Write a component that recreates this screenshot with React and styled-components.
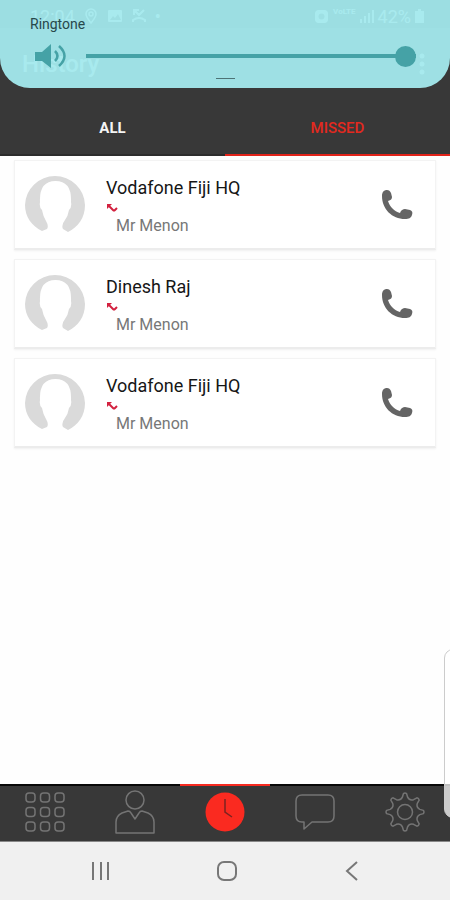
import React, { useState } from "react";
import styled, { createGlobalStyle } from "styled-components";

const GlobalStyle = createGlobalStyle`
  *, *::before, *::after { box-sizing: border-box; }
  body {
    margin: 0;
    background: #fefefe;
    font-family: Roboto, "Liberation Sans", sans-serif;
  }
  button { font: inherit; border: 0; padding: 0; background: none; cursor: pointer; }
  svg { display: block; flex: none; }
`;

const Screen = styled.div`
  position: relative;
  display: flex;
  flex-direction: column;
  min-height: 100vh;
  overflow: hidden;
`;

const Header = styled.header`
  position: relative;
  background: #383838;
`;

const StatusBar = styled.div`
  display: flex;
  align-items: center;
  justify-content: space-between;
  height: 28px;
  padding: 4px 26px 0 30px;
  background: #1c1c1c;
  color: #fff;
  font-size: 18px;
`;

const StatusGroup = styled.div`
  display: flex;
  align-items: center;
  gap: ${(p) => p.$gap}px;
`;

const NetworkLabel = styled.span`
  align-self: flex-start;
  font-size: 8px;
  font-weight: 700;
  line-height: 12px;
`;

const TitleBar = styled.div`
  display: flex;
  align-items: center;
  justify-content: space-between;
  height: 72px;
  padding: 0 18px 0 22px;
  color: #fff;
`;

const Title = styled.h1`
  margin: 0;
  font-size: 24px;
  font-weight: 500;
`;

const Tabs = styled.div`
  display: grid;
  grid-template-columns: 1fr 1fr;
  height: 56px;
`;

const Tab = styled.button.attrs({ type: "button", role: "tab" })`
  && {
    padding-top: 2px;
    border-bottom: 2px solid ${(p) => (p.$active ? "#e2231a" : "#2c2c2c")};
    color: ${(p) => (p.$active ? "#e2291f" : "#f4f4f4")};
    font-size: 15px;
    font-weight: ${(p) => (p.$active ? 500 : 700)};
  }
`;

const VolumePanel = styled.section`
  position: absolute;
  inset: 0 0 auto 0;
  height: 88px;
  padding: 16px 30px 0;
  background: rgba(163, 233, 237, 0.95);
  border-radius: 0 0 30px 30px;
`;

const VolumeLabel = styled.label`
  display: block;
  color: #27484b;
  font-size: 14px;
  line-height: 16px;
`;

const VolumeRow = styled.div`
  display: flex;
  align-items: center;
  gap: 20px;
  height: 28px;
  margin-top: 10px;
  padding: 0 4px;
`;

const Slider = styled.input`
  flex: 1;
  min-width: 0;
  height: 22px;
  margin: 0;
  appearance: none;
  background: linear-gradient(#45a2a6, #45a2a6) center / 100% 4px no-repeat;
  &::-webkit-slider-thumb {
    appearance: none;
    width: 21px;
    height: 21px;
    border-radius: 50%;
    background: #45a2a6;
  }
`;

const Handle = styled.div`
  width: 19px;
  height: 1px;
  margin: 8px auto 0;
  background: #4d7375;
`;

const CallList = styled.ul`
  flex: 1;
  display: flex;
  flex-direction: column;
  gap: 9px;
  margin: 0;
  padding: 4px 14px;
  list-style: none;
`;

const CallCard = styled.li`
  display: flex;
  align-items: flex-start;
  min-height: 90px;
  padding: 15px 22px 0 10px;
  background: #fff;
  border: 1px solid #f3f3f3;
  border-bottom: 2px solid #ececec;
  box-shadow: 0 1px 2px rgba(0, 0, 0, 0.06);
`;

const CallText = styled.div`
  flex: 1;
  min-width: 0;
  margin-left: 20px;
`;

const CallName = styled.div`
  color: #161616;
  font-size: 18px;
  line-height: 24px;
`;

const CallOwner = styled.div`
  padding-left: 10px;
  color: #777;
  font-size: 16px;
  line-height: 20px;
`;

const MissedMark = styled.div`
  padding: 4px 0 4px 1px;
`;

const CallButton = styled.button.attrs({ type: "button" })`
  margin-top: 13px;
`;

const BottomNav = styled.nav`
  display: grid;
  grid-template-columns: repeat(5, 1fr);
  height: 58px;
  background: #383838;
  border-bottom: 1px solid #888;
`;

const NavItem = styled.button.attrs({ type: "button" })`
  && {
    display: flex;
    align-items: center;
    justify-content: center;
    padding-bottom: 3px;
    border-top: 2px solid ${(p) => (p.$active ? "#f62a20" : "#080808")};
    color: #747474;
  }
`;

const SystemNav = styled.nav`
  display: flex;
  align-items: center;
  justify-content: space-between;
  height: 58px;
  padding: 0 84px 0 87px;
  background: #f0f0f0;
  color: #777;
`;

const SystemButton = styled.button.attrs({ type: "button" })`
  display: flex;
  && { color: inherit; }
`;

const EdgeHandle = styled.div`
  position: absolute;
  right: -12px;
  bottom: 82px;
  width: 18px;
  height: 169px;
  border: 1px solid #ccc;
  border-radius: 9px;
  background: rgba(255, 255, 255, 0.74);
`;

const PinIcon = () => (
  <svg width="16" height="16" viewBox="0 0 16 16" fill="none" stroke="#fff" strokeWidth="1.5">
    <path d="M8 15C4 10 3 8.500 3 6a5 5 0 0 1 10 0c0 2.500-1 4-5 9Z" />
    <circle cx="8" cy="6" r="2" />
  </svg>
);

const PhotoIcon = () => (
  <svg width="16" height="16" viewBox="0 0 16 16">
    <rect x="1" y="2" width="14" height="12" rx="1" fill="#fff" />
    <path d="m3 12 3-4 2 2 3-4 3 6Z" fill="#333" />
  </svg>
);

const MissedStatusIcon = () => (
  <svg width="16" height="16" viewBox="0 0 16 16" fill="none" stroke="#fff" strokeWidth="2">
    <path d="m3 2 5 5 5-5M3 7V2h5" />
    <path d="M2 14v-2q6-4 12 0v2" />
  </svg>
);

const AlarmIcon = () => (
  <svg width="15" height="15" viewBox="0 0 15 15">
    <rect x="1" y="1" width="13" height="13" rx="4" fill="#fff" />
    <circle cx="7.500" cy="7.500" r="3" fill="#444" />
  </svg>
);

const SignalIcon = () => (
  <svg width="14" height="14" viewBox="0 0 14 14" fill="#fff">
    <path d="M0 10h2v4H0zM4 7h2v7H4zM8 4h2v10H8zM12 1h2v13h-2z" />
  </svg>
);

const BatteryIcon = () => (
  <svg width="9" height="14" viewBox="0 0 9 14" fill="#fff">
    <path d="M3 0h3v2h3v12H0V2h3Z" />
  </svg>
);

const MoreIcon = () => (
  <svg width="20" height="24" viewBox="0 0 20 24" fill="#fff">
    <circle cx="10" cy="4" r="2.500" />
    <circle cx="10" cy="12" r="2.500" />
    <circle cx="10" cy="20" r="2.500" />
  </svg>
);

const SpeakerIcon = () => (
  <svg width="32" height="26" viewBox="0 0 32 26" fill="#45a2a6">
    <path d="M1 9h7l9-8v24l-9-7H1Z" />
    <g fill="none" stroke="#45a2a6" strokeWidth="2.500">
      <path d="M21 8q5 5 0 10" />
      <path d="M25 3q11 10 0 20" />
    </g>
  </svg>
);

const Avatar = () => (
  <svg width="61" height="58" viewBox="0 0 61 58">
    <path
      fill="#dadada"
      d="M30 0A30 30 0 0 0 0 29C0 41 7 50 17 55L22 53Q24 50 21 45Q18 40 17 34Q14 31 15 26Q14 5 30.500 5Q47 5 46 26Q47 31 44 34Q43 40 40 44Q36 49 38 53L43 56C53 51 60 42 60 29A30 30 0 0 0 30 0Z"
    />
  </svg>
);

const MissedArrow = () => (
  <svg width="11" height="8" viewBox="0 0 11 8" fill="none" stroke="#d3213f">
    <path d="M2 2 6 6Q7 7 8 6L10 4" strokeWidth="2" />
    <path d="M0 0h5L0 5Z" fill="#d3213f" stroke="none" />
  </svg>
);

const PhoneIcon = () => (
  <svg width="32" height="32" viewBox="0 0 32 32">
    <path
      fill="#646464"
      d="M1 7C1 3 3 1 6 1C8 1 9 2 10 4L11 8C11 10 10 11 7 12C9 18 13 22 19 24C20 21 22 20 24 20L29 21C31 22 32 23 31 26C30 29 28 30 24 30C11 30 1 20 1 7Z"
    />
  </svg>
);

const DialpadIcon = () => (
  <svg width="40" height="40" viewBox="0 0 40 40" fill="none" stroke="currentColor" strokeWidth="1.500">
    {[1, 15.5, 30].map((y) =>
      [1, 15.5, 30].map((x) => <rect key={`${x}-${y}`} x={x} y={y} width="9" height="9" rx="3" />)
    )}
  </svg>
);

const PersonIcon = () => (
  <svg width="40" height="44" viewBox="0 0 40 44" fill="none" stroke="currentColor" strokeWidth="1.500">
    <circle cx="20" cy="10" r="9" />
    <path d="M1 43V32Q1 26 7 23L13 21Q15 21 16 23L20 29L24 23Q25 21 27 21L33 23Q39 26 39 32V43Z" strokeLinejoin="round" />
  </svg>
);

const ClockIcon = () => (
  <svg width="40" height="40" viewBox="0 0 40 40">
    <circle cx="20" cy="20" r="19.500" fill="#fa2a20" />
    <path d="M20 7V20L27 25" fill="none" stroke="#7c2320" strokeWidth="1.500" />
  </svg>
);

const ChatIcon = () => (
  <svg width="40" height="38" viewBox="0 0 40 38" fill="none" stroke="currentColor" strokeWidth="1.500">
    <path
      d="M7 2H33Q39 2 39 8V23Q39 29 33 29H17L9 36V29H7Q1 29 1 23V8Q1 2 7 2Z"
      strokeLinejoin="round"
    />
  </svg>
);

const gearPath = (() => {
  const parts = [];
  for (let i = 0; i < 8; i += 1) {
    const at = (r, deg) => {
      const a = ((i * 45 + deg - 90) * Math.PI) / 180;
      return `${(20 + r * Math.cos(a)).toFixed(1)} ${(20 + r * Math.sin(a)).toFixed(1)}`;
    };
    parts.push(
      `${i ? "L" : "M"}${at(18.5, -5)}Q${at(19.5, 0)} ${at(18.5, 5)}L${at(15, 10)}Q${at(12, 22.5)} ${at(15, 35)}`
    );
  }
  return `${parts.join("")}Z`;
})();

const GearIcon = () => (
  <svg width="40" height="40" viewBox="0 0 40 40" fill="none" stroke="currentColor" strokeWidth="1.500">
    <path d={gearPath} strokeLinejoin="round" />
    <circle cx="20" cy="20" r="7.500" />
  </svg>
);

const RecentsIcon = () => (
  <svg width="28" height="20" viewBox="0 0 28 20" stroke="currentColor" strokeWidth="2">
    <path d="M6 1v18M14 1v18M21 1v18" />
  </svg>
);

const HomeIcon = () => (
  <svg width="22" height="22" viewBox="0 0 22 22" fill="none" stroke="currentColor" strokeWidth="2">
    <rect x="2" y="2" width="18" height="18" rx="6" />
  </svg>
);

const BackIcon = () => (
  <svg width="28" height="20" viewBox="0 0 28 20" fill="none" stroke="currentColor" strokeWidth="2">
    <path d="M19 1 9 10l10 9" />
  </svg>
);

const calls = [
  { id: 1, name: "Vodafone Fiji HQ", owner: "Mr Menon" },
  { id: 2, name: "Dinesh Raj", owner: "Mr Menon" },
  { id: 3, name: "Vodafone Fiji HQ", owner: "Mr Menon" },
];

const navItems = [
  { id: "dialpad", label: "Dialpad", Icon: DialpadIcon },
  { id: "contacts", label: "Contacts", Icon: PersonIcon },
  { id: "history", label: "History", Icon: ClockIcon },
  { id: "messages", label: "Messages", Icon: ChatIcon },
  { id: "settings", label: "Settings", Icon: GearIcon },
];

export default function App() {
  const [tab, setTab] = useState("MISSED");
  const [page, setPage] = useState("history");
  const [volume, setVolume] = useState(100);

  return (
    <Screen>
      <GlobalStyle />
      <Header>
        <StatusBar>
          <StatusGroup $gap={8}>
            <span>12:04</span>
            <PinIcon />
            <PhotoIcon />
            <MissedStatusIcon />
            <span>•</span>
          </StatusGroup>
          <StatusGroup $gap={4}>
            <AlarmIcon />
            <NetworkLabel>VoLTE</NetworkLabel>
            <SignalIcon />
            <span>42%</span>
            <BatteryIcon />
          </StatusGroup>
        </StatusBar>
        <TitleBar>
          <Title>History</Title>
          <button type="button" aria-label="More options">
            <MoreIcon />
          </button>
        </TitleBar>
        <Tabs role="tablist">
          {["ALL", "MISSED"].map((name) => (
            <Tab key={name} $active={tab === name} aria-selected={tab === name} onClick={() => setTab(name)}>
              {name}
            </Tab>
          ))}
        </Tabs>
        <VolumePanel>
          <VolumeLabel htmlFor="ringtone">Ringtone</VolumeLabel>
          <VolumeRow>
            <SpeakerIcon />
            <Slider
              id="ringtone"
              type="range"
              min="0"
              max="100"
              value={volume}
              onChange={(e) => setVolume(Number(e.target.value))}
            />
          </VolumeRow>
          <Handle />
        </VolumePanel>
      </Header>
      <CallList>
        {calls.map((call) => (
          <CallCard key={call.id}>
            <Avatar />
            <CallText>
              <CallName>{call.name}</CallName>
              <MissedMark>
                <MissedArrow />
              </MissedMark>
              <CallOwner>{call.owner}</CallOwner>
            </CallText>
            <CallButton aria-label={`Call ${call.name}`}>
              <PhoneIcon />
            </CallButton>
          </CallCard>
        ))}
      </CallList>
      <BottomNav aria-label="Main">
        {navItems.map(({ id, label, Icon }) => (
          <NavItem key={id} aria-label={label} $active={page === id} onClick={() => setPage(id)}>
            <Icon />
          </NavItem>
        ))}
      </BottomNav>
      <SystemNav aria-label="System">
        <SystemButton aria-label="Recent apps">
          <RecentsIcon />
        </SystemButton>
        <SystemButton aria-label="Home">
          <HomeIcon />
        </SystemButton>
        <SystemButton aria-label="Back">
          <BackIcon />
        </SystemButton>
      </SystemNav>
      <EdgeHandle />
    </Screen>
  );
}
